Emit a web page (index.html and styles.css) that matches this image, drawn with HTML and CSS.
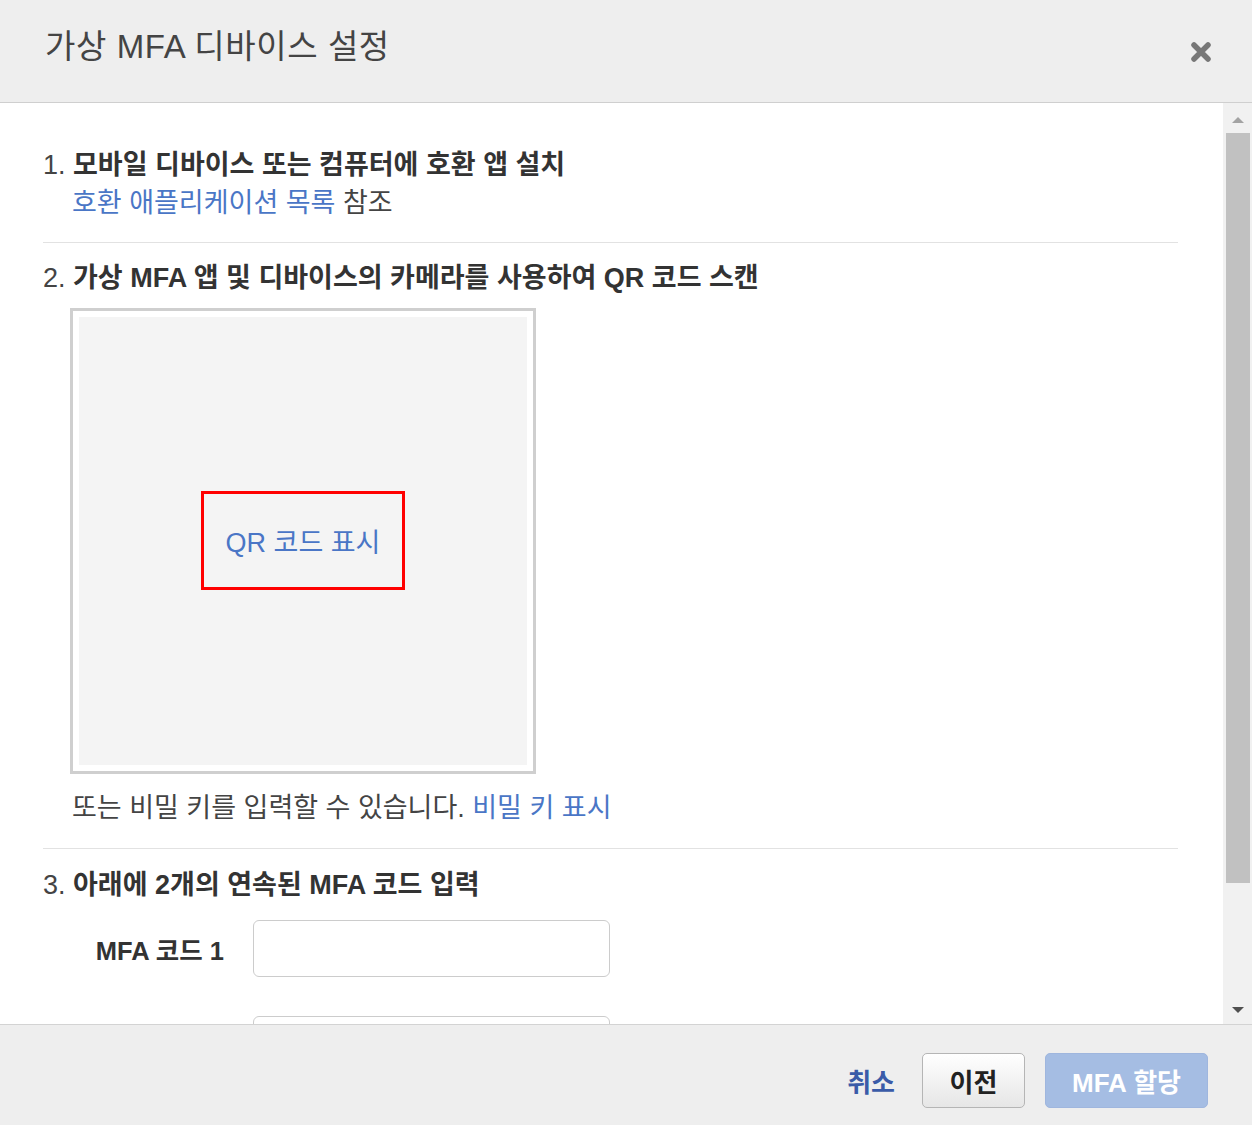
FILE: index.html
```html
<!DOCTYPE html>
<html lang="ko">
<head>
<meta charset="utf-8">
<title>가상 MFA 디바이스 설정</title>
<link rel="stylesheet" href="styles.css">
</head>
<body>
<div class="modal">
  <header class="modal-header">
    <h1 class="modal-title">가상 MFA 디바이스 설정</h1>
    <button class="close-btn" aria-label="닫기">
      <svg width="22" height="22" viewBox="0 0 22 22"><path d="M4 4 L18 18 M18 4 L4 18" stroke="#777" stroke-width="5.5" stroke-linecap="round"/></svg>
    </button>
  </header>
  <div class="modal-body">
    <div class="content">
      <section class="step step-1">
        <p class="step-title"><span class="num">1.</span> 모바일 디바이스 또는 컴퓨터에 호환 앱 설치</p>
        <p class="step-text"><a class="link" href="#">호환 애플리케이션 목록</a> 참조</p>
      </section>
      <section class="step step-2">
        <p class="step-title"><span class="num">2.</span> 가상 MFA 앱 및 디바이스의 카메라를 사용하여 QR 코드 스캔</p>
        <div class="qr-box">
          <div class="qr-inner">
            <a class="link qr-link" href="#">QR 코드 표시</a>
          </div>
        </div>
        <p class="step-text secret">또는 비밀 키를 입력할 수 있습니다. <a class="link" href="#">비밀 키 표시</a></p>
      </section>
      <section class="step step-3">
        <p class="step-title"><span class="num">3.</span> 아래에 2개의 연속된 MFA 코드 입력</p>
        <div class="field">
          <label class="field-label" for="mfa1">MFA 코드 1</label>
          <input class="field-input" id="mfa1" type="text">
        </div>
        <div class="field">
          <span class="field-label"></span>
          <input class="field-input" type="text" aria-label="MFA 코드 2">
        </div>
      </section>
    </div>
    <div class="scrollbar">
      <span class="arrow up"></span>
      <span class="track"><span class="thumb"></span></span>
      <span class="arrow down"></span>
    </div>
  </div>
  <footer class="modal-footer">
    <a class="cancel" href="#">취소</a>
    <button class="btn btn-default">이전</button>
    <button class="btn btn-primary">MFA 할당</button>
  </footer>
</div>
</body>
</html>
```

FILE: styles.css
```css
* { box-sizing: border-box; }
html, body {
  margin: 0;
  padding: 0;
  height: 100%;
}
body {
  font-family: "Liberation Sans", "Noto Sans CJK KR", sans-serif;
  color: #444;
  background: #fff;
}
p { margin: 0; }

.modal {
  width: 1252px;
  height: 1125px;
  display: flex;
  flex-direction: column;
  overflow: hidden;
}

.modal-header {
  height: 103px;
  flex: none;
  background: #eeeeee;
  border-bottom: 1px solid #cfcfcf;
  display: flex;
  align-items: flex-start;
  justify-content: space-between;
  padding: 0 40px 0 45px;
}
.modal-title {
  margin: 0;
  padding-top: 26px;
  font-size: 33px;
  line-height: 42px;
  letter-spacing: 0.6px;
  font-weight: normal;
  color: #444;
}
.close-btn {
  border: 0;
  background: none;
  padding: 0;
  margin-top: 41px;
  width: 22px;
  height: 22px;
  cursor: pointer;
}
.close-btn svg { display: block; }

.modal-body {
  flex: 1;
  display: flex;
  min-height: 0;
  overflow: hidden;
  background: #fff;
}
.content {
  flex: 1;
  padding: 0 45px 0 43px;
  overflow: hidden;
}

.step { border-bottom: 1px solid #e2e2e2; }
.step-1 { padding: 43px 0 20px; }
.step-2 { padding: 16px 0 21px; }
.step-3 { padding: 17px 0 0; border-bottom: 0; }

.step-title {
  font-size: 27px;
  line-height: 38px;
  font-weight: bold;
  color: #333;
}
.step-title .num { font-weight: normal; color: #444; }
.step-text {
  font-size: 27px;
  line-height: 38px;
  padding-left: 29px;
  color: #444;
}
.link { color: #4a76c6; text-decoration: none; }

.qr-box {
  margin: 11px 0 0 27px;
  width: 466px;
  height: 466px;
  border: 3px solid #cfcfcf;
  background: #fff;
  padding: 6px;
}
.qr-inner {
  width: 100%;
  height: 100%;
  background: #f4f4f4;
  display: flex;
  align-items: center;
  justify-content: center;
}
.qr-link {
  width: 204px;
  height: 99px;
  border: 3px solid #ff0000;
  display: flex;
  align-items: center;
  justify-content: center;
  font-size: 27px;
  margin-top: -2px;
}
.secret { margin-top: 15px; }

.field {
  display: flex;
  align-items: center;
  margin-top: 16px;
}
.field + .field { margin-top: 39px; }
.field-label {
  width: 210px;
  flex: none;
  text-align: right;
  padding-right: 29px;
  font-size: 25.5px;
  font-weight: bold;
  color: #333;
}
.field-input {
  width: 357px;
  height: 57px;
  border: 1px solid #cccccc;
  border-radius: 6px;
  background: #fff;
}

.scrollbar {
  width: 29px;
  flex: none;
  background: #f1f1f1;
  display: flex;
  flex-direction: column;
  align-items: center;
}
.arrow {
  width: 0;
  height: 0;
  border-left: 6px solid transparent;
  border-right: 6px solid transparent;
  flex: none;
}
.arrow.up {
  border-bottom: 6px solid #a3a3a3;
  margin-top: 14px;
}
.arrow.down {
  border-top: 6px solid #505050;
  margin: 0 0 11px;
}
.track {
  flex: 1;
  width: 100%;
  padding: 10px 2px 0 3px;
}
.thumb {
  display: block;
  height: 750px;
  background: #c1c1c1;
}

.modal-footer {
  height: 101px;
  flex: none;
  background: #eeeeee;
  border-top: 1px solid #d3d3d3;
  display: flex;
  align-items: center;
  justify-content: flex-end;
  padding: 10px 44px 0 0;
  gap: 20px;
}
.cancel {
  font-size: 26px;
  font-weight: bold;
  color: #3a5ba8;
  text-decoration: none;
  margin-right: 7px;
}
.btn {
  height: 55px;
  border-radius: 5px;
  font-family: inherit;
  font-size: 26px;
  font-weight: bold;
  cursor: pointer;
}
.btn-default {
  width: 103px;
  border: 1px solid #b5b5b5;
  background: linear-gradient(#ffffff, #e6e6e6);
  color: #222;
}
.btn-primary {
  width: 163px;
  border: 1px solid #9fb6de;
  background: #a5bde3;
  color: #fff;
}
```
